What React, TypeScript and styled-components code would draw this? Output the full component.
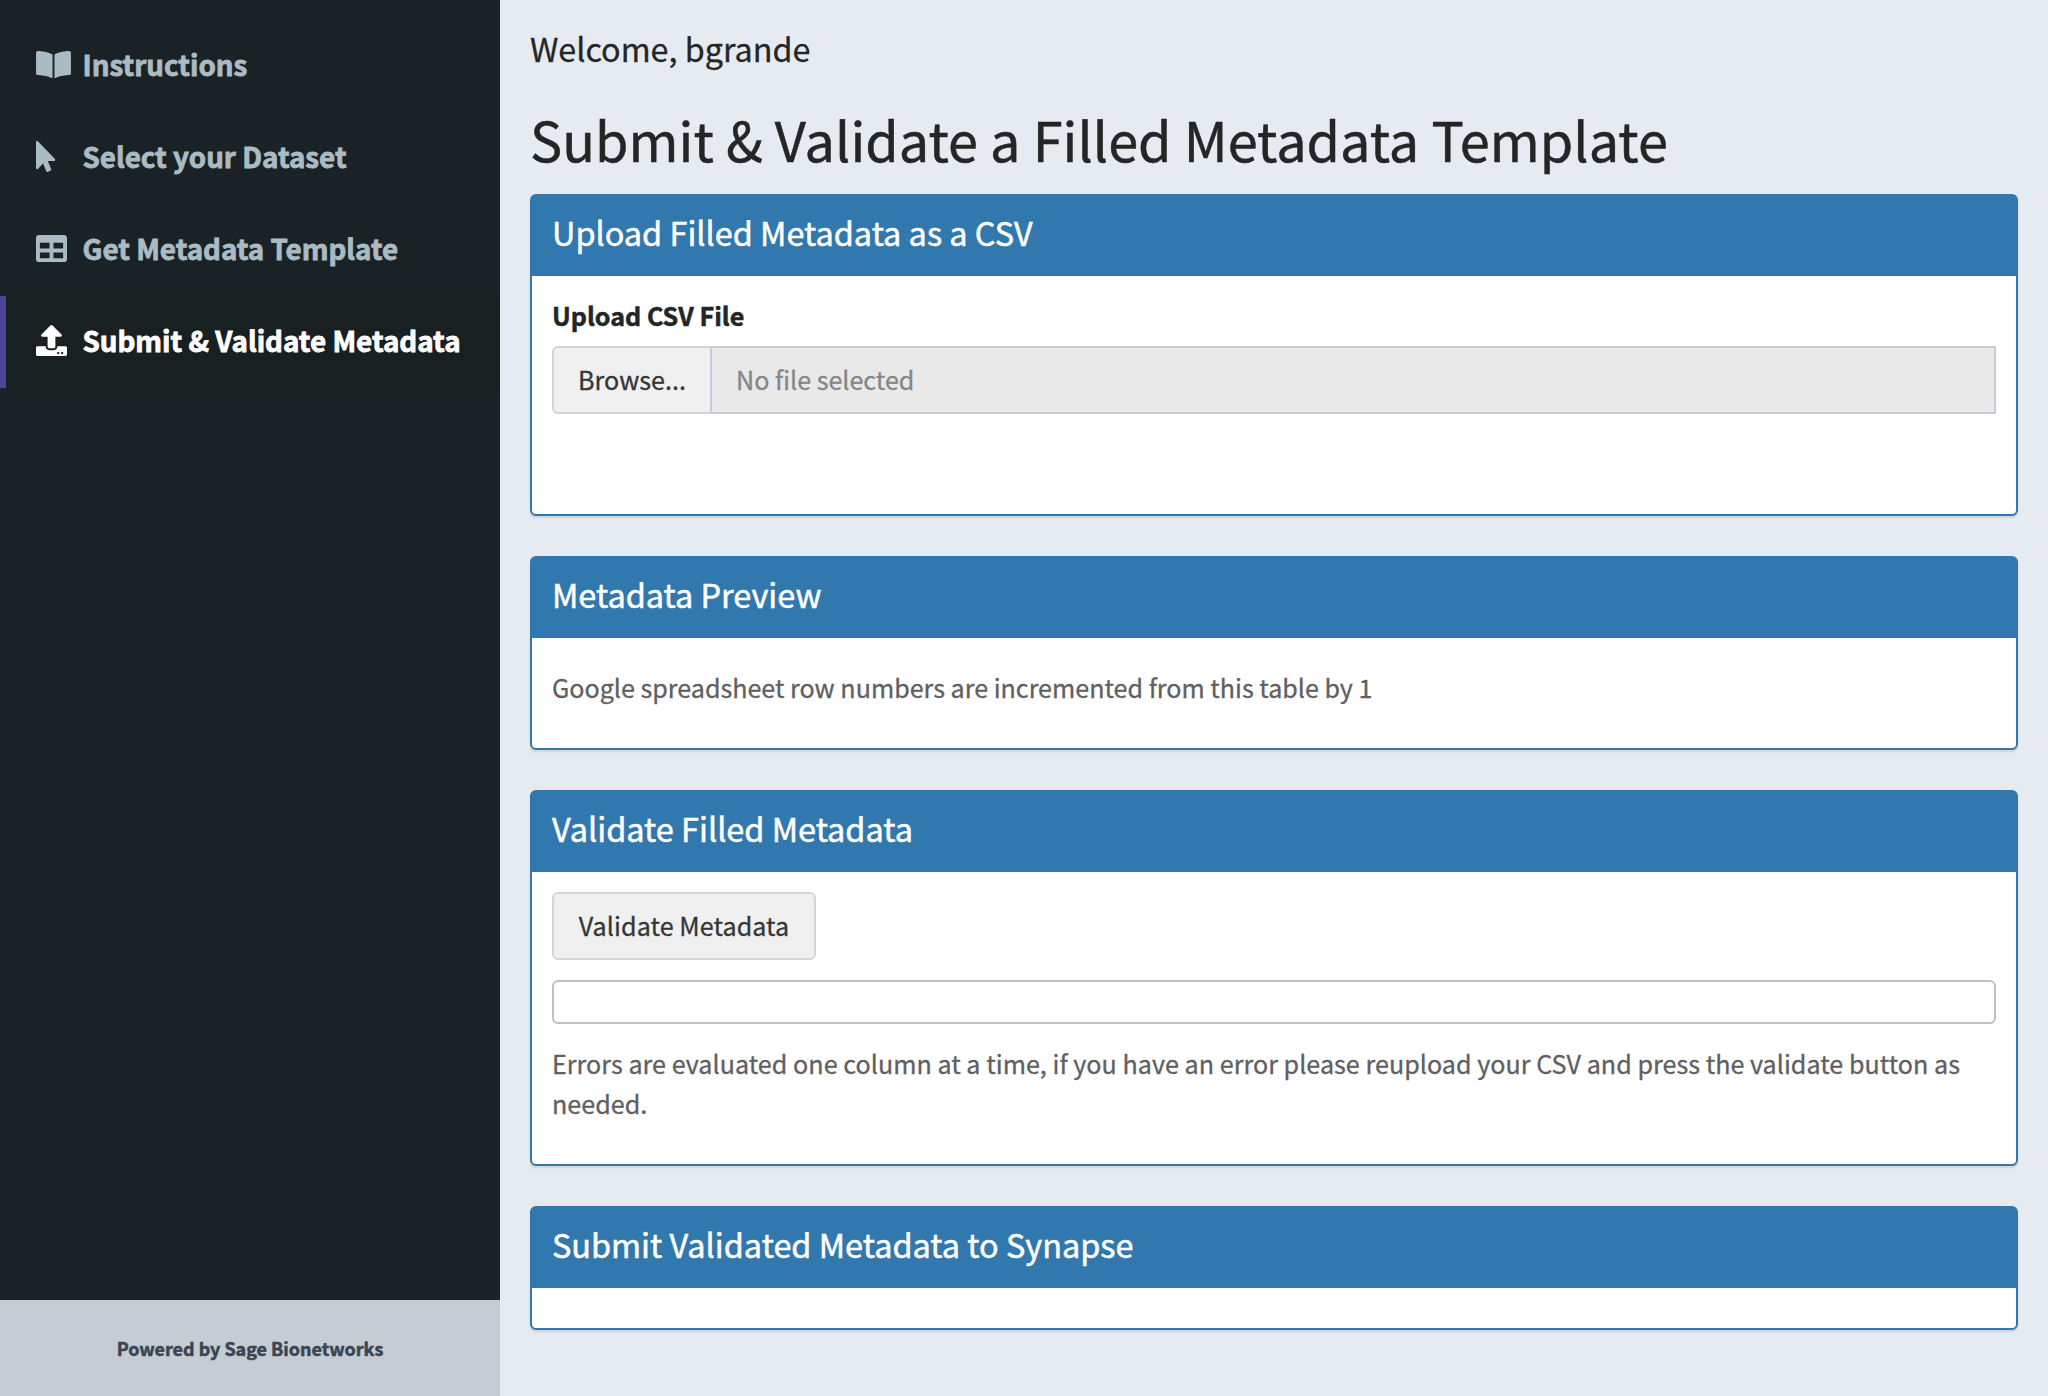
import React from "react";
import styled, { createGlobalStyle } from "styled-components";
import { FaBookOpen, FaMousePointer, FaTable, FaUpload } from "react-icons/fa";

const GlobalStyle = createGlobalStyle`
  *, *::before, *::after { box-sizing: border-box; }
  body {
    margin: 0;
    background: #e6ebf2;
    color: #242626;
    font-family: "Noto Sans CJK SC", "Noto Sans", sans-serif;
    font-size: 25.1px;
    font-weight: 400;
    -webkit-text-stroke: 0.3px currentColor;
  }
`;

const Page = styled.div`
  display: flex;
  width: 2048px;
  height: 1396px;
  overflow: hidden;
`;

const Sidebar = styled.aside`
  display: flex;
  flex-direction: column;
  flex: 0 0 500px;
  background: #1b2225;
`;

const Menu = styled.nav`
  display: flex;
  flex-direction: column;
  flex: 1;
  padding-top: 20px;
`;

const MenuItem = styled.a<{ $active?: boolean }>`
  display: flex;
  height: 92px;
  padding: 0 0 4px 30px;
  border-left: 6px solid ${(p) => (p.$active ? "#4f4698" : "transparent")};
  background: ${(p) => (p.$active ? "#182022" : "transparent")};
  color: ${(p) => (p.$active ? "#ffffff" : "#aabbc4")};
  font-size: 27.75px;
  font-weight: 700;
  line-height: 88px;
  white-space: nowrap;
  -webkit-text-stroke: 0.8px currentColor;
`;

const MenuIcon = styled.span<{ $width: number }>`
  display: flex;
  flex: 0 0 46.5px;
  height: 89px;
  align-items: center;

  svg {
    display: block;
    width: ${(p) => p.$width}px;
    height: 31px;
  }
`;

const Footer = styled.footer`
  height: 96px;
  background: #c5ccd4;
  color: #3a4452;
  font-size: 17.95px;
  font-weight: 700;
  line-height: 96px;
  text-align: center;
  -webkit-text-stroke: 0.5px currentColor;
`;

const Content = styled.main`
  flex: 1;
  padding: 0 30px;
`;

const Welcome = styled.h3`
  margin: 0;
  font-size: 32.3px;
  font-weight: 400;
  line-height: 96px;
`;

const Title = styled.h2`
  margin: 0 0 13px;
  font-size: 54px;
  font-weight: 400;
  letter-spacing: 0.04px;
  line-height: 85px;
  white-space: nowrap;
  -webkit-text-stroke: 0.5px currentColor;
`;

const Box = styled.section<{ $height: number }>`
  height: ${(p) => p.$height}px;
  margin-bottom: 40px;
  border: 2px solid #3078ae;
  border-radius: 6px;
  background: #ffffff;
  box-shadow: 0 2px 2px rgba(0, 0, 0, 0.1);
`;

const BoxHeader = styled.h3`
  height: 80px;
  margin: 0;
  padding: 0 20px;
  background: #3078ae;
  color: #ffffff;
  font-size: 32.45px;
  font-weight: 400;
  line-height: 72px;
  -webkit-text-stroke: 0.5px currentColor;
`;

const BoxBody = styled.div`
  padding: 20px;
`;

const Label = styled.label`
  display: block;
  margin-bottom: 12px;
  font-weight: 700;
  line-height: 38px;
  -webkit-text-stroke: 0.5px currentColor;
`;

const FileRow = styled.div`
  display: flex;
  height: 68px;
  line-height: 62px;
`;

const Button = styled.button<{ $width: number; $joined?: boolean }>`
  width: ${(p) => p.$width}px;
  height: 68px;
  padding: 0 0 2px;
  border: 2px solid #d5d5d7;
  border-right-width: ${(p) => (p.$joined ? 0 : 2)}px;
  border-radius: ${(p) => (p.$joined ? "6px 0 0 6px" : "6px")};
  background: #f0f0f0;
  color: #343636;
  font: inherit;
  letter-spacing: ${(p) => (p.$joined ? 0 : 0.08)}px;
  line-height: 62px;
  white-space: nowrap;
`;

const FileName = styled.div`
  flex: 1;
  padding: 0 24px;
  border: 2px solid #c8ccda;
  background: #e9e9e9;
  color: #858687;
`;

const Progress = styled.div`
  height: 44px;
  margin-top: 20px;
  border: 2px solid #c0c0c1;
  border-radius: 6px;
`;

const HelpText = styled.p<{ $top: number; $tracking?: number }>`
  margin: ${(p) => p.$top}px 0 21px;
  color: #5f6061;
  letter-spacing: ${(p) => p.$tracking ?? 0}px;
  line-height: 40px;
`;

const items = [
  { label: "Instructions", Icon: FaBookOpen, width: 35 },
  { label: "Select your Dataset", Icon: FaMousePointer, width: 19.4 },
  { label: "Get Metadata Template", Icon: FaTable, width: 31 },
  { label: "Submit & Validate Metadata", Icon: FaUpload, width: 31, active: true },
];

export default function App() {
  return (
    <>
      <GlobalStyle />
      <Page>
        <Sidebar>
          <Menu>
            {items.map(({ label, Icon, width, active }) => (
              <MenuItem key={label} $active={active}>
                <MenuIcon $width={width}>
                  <Icon />
                </MenuIcon>
                {label}
              </MenuItem>
            ))}
          </Menu>
          <Footer>Powered by Sage Bionetworks</Footer>
        </Sidebar>
        <Content>
          <Welcome>Welcome, bgrande</Welcome>
          <Title>Submit &amp; Validate a Filled Metadata Template</Title>
          <Box $height={322}>
            <BoxHeader>Upload Filled Metadata as a CSV</BoxHeader>
            <BoxBody>
              <Label>Upload CSV File</Label>
              <FileRow>
                <Button $width={158} $joined>
                  Browse...
                </Button>
                <FileName>No file selected</FileName>
              </FileRow>
            </BoxBody>
          </Box>
          <Box $height={194}>
            <BoxHeader>Metadata Preview</BoxHeader>
            <BoxBody>
              <HelpText $top={9}>
                Google spreadsheet row numbers are incremented from this table by 1
              </HelpText>
            </BoxBody>
          </Box>
          <Box $height={376}>
            <BoxHeader>Validate Filled Metadata</BoxHeader>
            <BoxBody>
              <Button $width={264}>Validate Metadata</Button>
              <Progress />
              <HelpText $top={19} $tracking={0.038}>
                Errors are evaluated one column at a time, if you have an error please reupload your
                CSV and press the validate button as needed.
              </HelpText>
            </BoxBody>
          </Box>
          <Box $height={124}>
            <BoxHeader>Submit Validated Metadata to Synapse</BoxHeader>
          </Box>
        </Content>
      </Page>
    </>
  );
}
